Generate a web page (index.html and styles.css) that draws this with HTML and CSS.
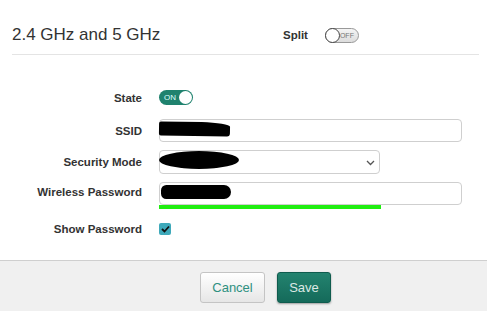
FILE: index.html
```html
<!DOCTYPE html>
<html>
<head>
<meta charset="utf-8">
<link rel="stylesheet" href="styles.css">
</head>
<body>
<div class="page">
  <header class="head">
    <h1 class="title">2.4 GHz and 5 GHz</h1>
    <span class="split-label">Split</span>
    <span class="toggle off"><span class="knob"></span><span class="ttext">OFF</span></span>
  </header>
  <main class="form">
    <div class="row state">
      <label class="lbl">State</label>
      <span class="toggle on"><span class="ttext">ON</span><span class="knob"></span></span>
    </div>
    <div class="row">
      <label class="lbl">SSID</label>
      <div class="field wide"><span class="redact r1"></span></div>
    </div>
    <div class="row">
      <label class="lbl">Security Mode</label>
      <div class="field select"><span class="redact r2"></span>
        <svg class="chev" width="9" height="6" viewBox="0 0 9 6"><polyline points="1,1 4.5,4.5 8,1" fill="none" stroke="#555" stroke-width="1.3"/></svg>
      </div>
    </div>
    <div class="row pw">
      <label class="lbl tall">Wireless Password</label>
      <div class="pwcol">
        <div class="field wide"><span class="redact r3"></span></div>
        <div class="strength"></div>
      </div>
    </div>
    <div class="row">
      <label class="lbl">Show Password</label>
      <span class="check"><svg width="9" height="8" viewBox="0 0 9 8"><polyline points="1,4 3.5,6.5 8,1.5" fill="none" stroke="#111" stroke-width="1.8"/></svg></span>
    </div>
  </main>
  <footer class="foot">
    <button class="btn cancel">Cancel</button>
    <button class="btn save">Save</button>
  </footer>
</div>
</body>
</html>
```
FILE: styles.css
```css
* { box-sizing: border-box; }
html, body { margin: 0; padding: 0; background: #fff; }
body { font-family: "Liberation Sans", Arial, sans-serif; color: #333; width: 487px; height: 311px; overflow: hidden; }
.page { display: flex; flex-direction: column; height: 311px; }
.head {
  margin: 0 8px 0 12px;
  height: 55px;
  padding-top: 16px;
  border-bottom: 1px solid #e4e4e4;
  display: flex;
  align-items: center;
}
.title { margin: 0; font-size: 17px; font-weight: normal; color: #333; width: 271px; }
.split-label { font-size: 11.5px; font-weight: bold; color: #333; margin-right: 17px; }
.toggle {
  position: relative;
  display: inline-flex;
  align-items: center;
  width: 34px;
  height: 15px;
  border-radius: 8px;
}
.toggle.off {
  background: linear-gradient(#f4f4f4, #dcdcdc);
  border: 1px solid #999;
  justify-content: space-between;
}
.toggle.off .knob {
  width: 15px; height: 15px; margin-left: -1px;
  border-radius: 50%; background: #fff; border: 1px solid #444;
}
.toggle.off .ttext { font-size: 7px; color: #777; margin-right: 4px; }
.toggle.on {
  background: #1f826e;
  justify-content: space-between;
}
.toggle.on .ttext { font-size: 8px; color: #dff; margin-left: 5px; }
.toggle.on .knob {
  width: 13px; height: 13px; margin-right: 1px;
  border-radius: 50%; background: #fff;
}
.form { padding-top: 35px; flex: 1; }
.row { display: flex; align-items: center; margin-bottom: 8px; }
.row.state { margin-bottom: 14px; }
.row.pw { align-items: flex-start; margin-bottom: 14px; }
.lbl {
  width: 142px; text-align: right; margin-right: 17px;
  font-size: 11.5px; font-weight: bold; color: #333;
}
.lbl.tall { line-height: 21px; }
.field {
  position: relative;
  height: 23px;
  border: 1px solid #cfcfcf;
  border-radius: 4px;
  background: #fff;
}
.field.wide { width: 303px; }
.field.select { width: 221px; height: 24px; }
.chev { position: absolute; right: 4px; top: 9px; }
.pwcol { display: flex; flex-direction: column; }
.strength { width: 222px; height: 4px; background: #20ee10; }
.redact { position: absolute; background: #000; }
.r1 { left: -1px; top: 2px; width: 71px; height: 14px; border-radius: 2px 40% 3px 2px / 2px 30% 3px 2px; transform: rotate(1deg); }
.r2 { left: -1px; top: 0px; width: 80px; height: 18px; border-radius: 50%; }
.r3 { left: 1px; top: 2px; width: 70px; height: 14px; border-radius: 6px 8px 8px 6px; }
.check {
  display: inline-flex; align-items: center; justify-content: center;
  width: 12px; height: 12px; border-radius: 2px; background: #3ea9ba;
}
.foot {
  height: 51px;
  border-top: 1px solid #cfcfcf;
  background: #f0f0f0;
  display: flex;
  align-items: center;
  padding-left: 200px;
  padding-top: 2px;
}
.btn {
  height: 31px;
  font-family: "Liberation Sans", Arial, sans-serif;
  font-size: 13px;
  border-radius: 3px;
  padding: 0;
}
.cancel {
  width: 65px;
  border: 1px solid #c4c4c4;
  background: linear-gradient(#ffffff, #e6e6e6);
  color: #2e9080;
}
.save {
  width: 54px;
  margin-left: 12px;
  border: 1px solid #0f5c4e;
  background: linear-gradient(#23836f, #156a5a);
  color: #dce8e4;
  box-shadow: 0 1px 2px rgba(0,0,0,0.35);
}
```
